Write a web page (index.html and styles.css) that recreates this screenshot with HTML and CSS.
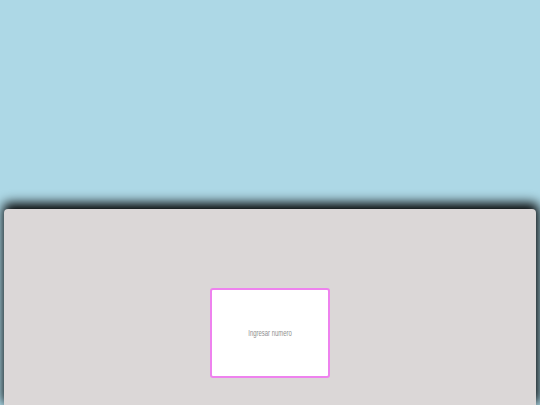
FILE: index.html
```html
<!DOCTYPE html>
<html>
<head>
<meta charset="utf-8">
<link rel="stylesheet" href="styles.css">
</head>
<body>
<div class="panel">
  <div class="field"><span class="placeholder">Ingresar numero</span></div>
</div>
</body>
</html>
```
FILE: styles.css
```css
html, body {
  margin: 0;
  padding: 0;
  height: 100%;
  overflow: hidden;
  background: #add8e6;
  font-family: "Liberation Sans", Arial, sans-serif;
}
.panel {
  margin: 209px 4px 0 4px;
  height: 196px;
  background: #dbd7d7;
  border-radius: 4px 4px 0 0;
  box-shadow: 1px -4px 12px 2px #000;
  display: flex;
  justify-content: center;
  padding-top: 79px;
  box-sizing: border-box;
}
.field {
  width: 120px;
  height: 90px;
  box-sizing: border-box;
  background: #fff;
  border: 2px solid #ee82ee;
  border-radius: 3px;
  display: flex;
  align-items: center;
  justify-content: center;
}
.placeholder {
  font-size: 9px;
  color: #8f8f8f;
  transform: scaleX(0.66);
  white-space: nowrap;
}
```
